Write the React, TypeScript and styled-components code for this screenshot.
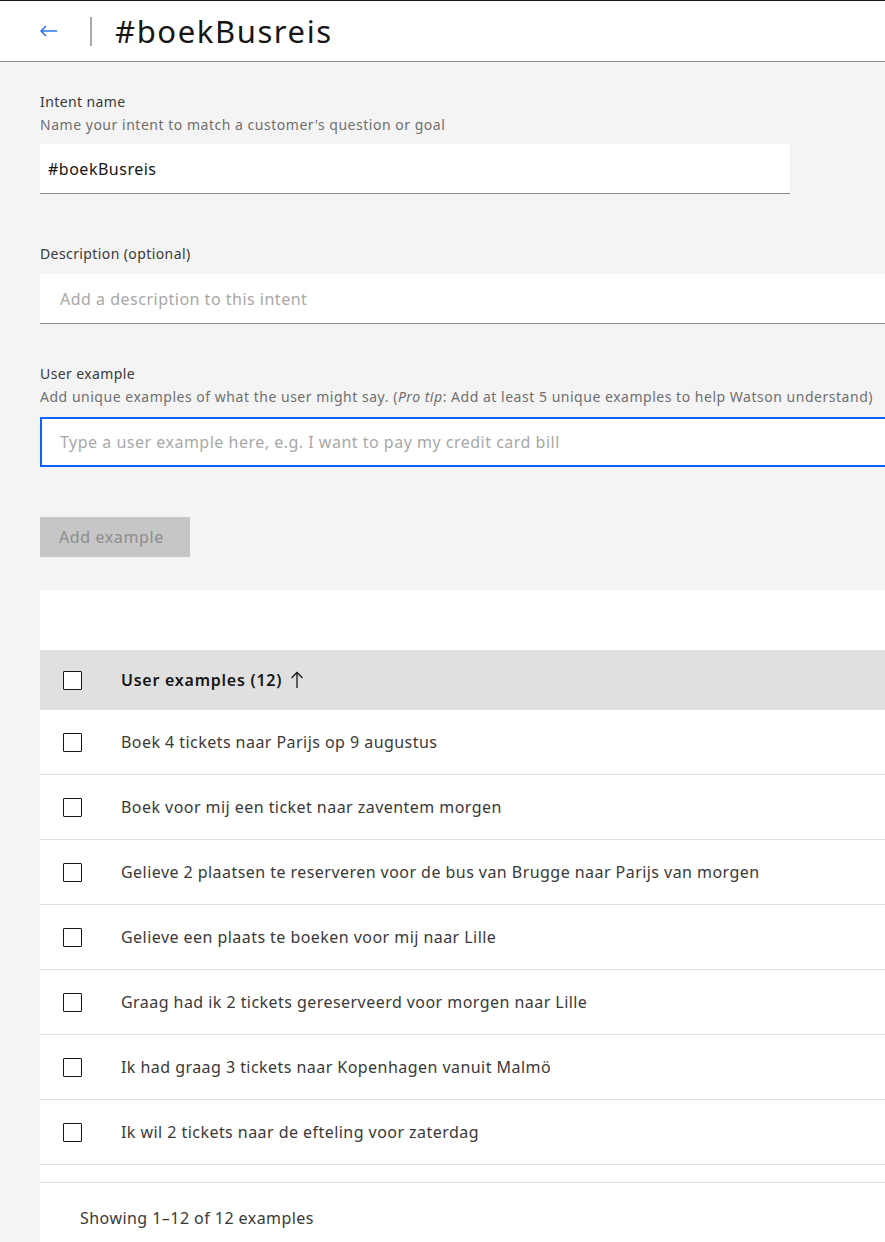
import React from "react";
import styled, { createGlobalStyle } from "styled-components";

const Global = createGlobalStyle`
  html, body { margin: 0; padding: 0; overflow: hidden; background: #f4f4f4; }
  body { font-family: "Noto Sans", "Open Sans", sans-serif; color: #161616; }
  * { box-sizing: border-box; }
`;

const Page = styled.div`
  width: 885px;
  height: 1242px;
  overflow: hidden;
  background: #f4f4f4;
`;

const Header = styled.header`
  height: 62px;
  background: #fff;
  border-top: 1px solid #161616;
  border-bottom: 1px solid #8d8d8d;
  display: flex;
  align-items: center;
  padding-left: 40px;
`;

const BackButton = styled.button`
  border: none;
  background: none;
  padding: 0;
  width: 20px;
  height: 20px;
  display: flex;
  align-items: center;
  color: #0f62fe;
  cursor: pointer;
`;

const Divider = styled.span`
  width: 2px;
  height: 29px;
  background: #a8a8a8;
  margin: 0 23px 0 30px;
`;

const Title = styled.h1`
  margin: 0;
  font-size: 31px;
  font-weight: 400;
  color: #161616;
  letter-spacing: 1.6px;
`;

const Main = styled.main`
  padding: 30px 0 0 40px;
  display: flex;
  flex-direction: column;
`;

const Field = styled.div<{ $gap: number }>`
  display: flex;
  flex-direction: column;
  margin-bottom: ${(p) => p.$gap}px;
`;

const Label = styled.label`
  font-size: 14px;
  line-height: 18px;
  color: #393939;
  letter-spacing: 0.4px;
  margin-top: 1px;
`;

const Helper = styled.div`
  font-size: 14px;
  line-height: 18px;
  color: #6f6f6f;
  margin-top: 5px;
  letter-spacing: 0.52px;
  white-space: nowrap;
  em { font-style: italic; }
`;

const TextInput = styled.input<{ $width?: number; $focus?: boolean; $mt: number; $pl: number }>`
  width: ${(p) => (p.$width ? `${p.$width}px` : "100%")};
  height: 50px;
  margin-top: ${(p) => p.$mt}px;
  background: #fff;
  border: none;
  border-bottom: 1px solid #8d8d8d;
  ${(p) => (p.$focus ? "border: 2px solid #0f62fe; border-right: none;" : "")}
  padding: 0 0 0 ${(p) => p.$pl}px;
  font-family: inherit;
  font-size: 16px;
  letter-spacing: 0.5px;
  color: #161616;
  outline: none;
  &::placeholder { color: #a8a8a8; }
`;

const AddButton = styled.button`
  width: 150px;
  height: 40px;
  background: #c6c6c6;
  color: #8d8d8d;
  border: none;
  font-family: inherit;
  font-size: 16px;
  letter-spacing: 0.6px;
  text-align: left;
  padding: 0 19px;
  margin-top: 50px;
  margin-bottom: 33px;
`;

const Table = styled.section`
  background: #fff;
  width: 100%;
`;

const Toolbar = styled.div`
  height: 60px;
`;

const Row = styled.div<{ $head?: boolean }>`
  height: ${(p) => (p.$head ? 60 : 65)}px;
  display: flex;
  align-items: center;
  background: ${(p) => (p.$head ? "#e0e0e0" : "#fff")};
  border-bottom: ${(p) => (p.$head ? "none" : "1px solid #e0e0e0")};
  flex-shrink: 0;
`;

const Check = styled.span`
  width: 19px;
  height: 19px;
  border: 1px solid #161616;
  border-radius: 1px;
  margin: 0 39px 0 23px;
  background: #fff;
  flex-shrink: 0;
`;

const Cell = styled.span<{ $head?: boolean }>`
  font-size: 16px;
  font-weight: ${(p) => (p.$head ? 600 : 400)};
  color: ${(p) => (p.$head ? "#161616" : "#393939")};
  letter-spacing: ${(p) => (p.$head ? 0.75 : 0.45)}px;
  display: flex;
  align-items: center;
  gap: 8px;
  white-space: nowrap;
`;

const Body = styled.div`
  height: 473px;
  overflow: hidden;
  display: flex;
  flex-direction: column;
  border-bottom: 1px solid #e0e0e0;
`;

const Footer = styled.div`
  padding: 26px 0 15px 40px;
  font-size: 16px;
  line-height: 18px;
  letter-spacing: 0.45px;
  color: #393939;
`;

const examples = [
  "Boek 4 tickets naar Parijs op 9 augustus",
  "Boek voor mij een ticket naar zaventem morgen",
  "Gelieve 2 plaatsen te reserveren voor de bus van Brugge naar Parijs van morgen",
  "Gelieve een plaats te boeken voor mij naar Lille",
  "Graag had ik 2 tickets gereserveerd voor morgen naar Lille",
  "Ik had graag 3 tickets naar Kopenhagen vanuit Malmö",
  "Ik wil 2 tickets naar de efteling voor zaterdag",
];

export default function App() {
  return (
    <Page>
      <Global />
      <Header>
        <BackButton aria-label="Back">
          <svg width="18" height="12" viewBox="0 0 18 12" fill="none" stroke="currentColor" strokeWidth="1.3">
            <path d="M1 6 H17" />
            <path d="M6 1 L1 6 L6 11" />
          </svg>
        </BackButton>
        <Divider />
        <Title>#boekBusreis</Title>
      </Header>
      <Main>
        <Field $gap={50}>
          <Label>Intent name</Label>
          <Helper>Name your intent to match a customer's question or goal</Helper>
          <TextInput $width={750} $mt={10} $pl={8} defaultValue="#boekBusreis" />
        </Field>
        <Field $gap={40}>
          <Label>Description (optional)</Label>
          <TextInput $mt={11} $pl={20} placeholder="Add a description to this intent" />
        </Field>
        <Field $gap={0}>
          <Label>User example</Label>
          <Helper>
            Add unique examples of what the user might say. (<em>Pro tip</em>: Add at least 5 unique examples to help Watson understand)
          </Helper>
          <TextInput $focus $mt={11} $pl={18} placeholder="Type a user example here, e.g. I want to pay my credit card bill" />
        </Field>
        <div>
          <AddButton disabled>Add example</AddButton>
        </div>
        <Table>
          <Toolbar />
          <Row $head>
            <Check />
            <Cell $head>
              User examples (12)
              <svg width="14" height="18" viewBox="0 0 14 18" fill="none" stroke="#161616" strokeWidth="1.3">
                <path d="M7 17 V1.5" />
                <path d="M1.5 7 L7 1.5 L12.5 7" />
              </svg>
            </Cell>
          </Row>
          <Body>
            {examples.map((e) => (
              <Row key={e}>
                <Check />
                <Cell>{e}</Cell>
              </Row>
            ))}
          </Body>
          <Footer>Showing 1–12 of 12 examples</Footer>
        </Table>
      </Main>
    </Page>
  );
}
